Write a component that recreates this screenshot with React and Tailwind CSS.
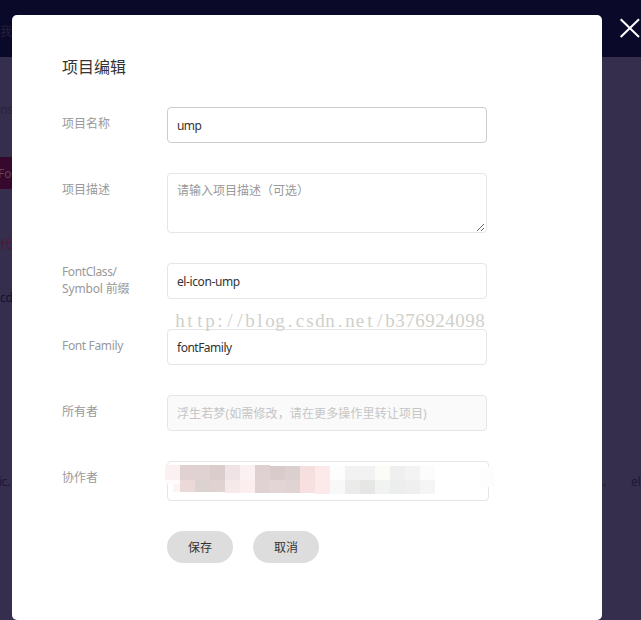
import React from 'react';

const TOP = ['bg-[#fbf1f3]', 'bg-[#e0d2d2]', 'bg-[#e0d2d2]', 'bg-[#dccdcd]', 'bg-[#efe3e6]', 'bg-[#fcf1f2]', 'bg-[#dfd1d1]', 'bg-[#d9cacb]', 'bg-[#dccfcf]', 'bg-[#f6dfdf]', 'bg-[#fce9ea]', 'bg-[#fdfdfd]', 'bg-[#f2f2f2]', 'bg-[#f2f2f3]', 'bg-[#fbfbf8]', 'bg-[#efefef]', 'bg-[#f3f3f3]', 'bg-[#fcfcfc]'];
const BOTTOM = ['bg-transparent', 'bg-[#ead9d7]', 'bg-[#dcd2d0]', 'bg-[#e0d2d1]', 'bg-[#f6e9e9]', 'bg-[#fceeef]', 'bg-[#e0d2d2]', 'bg-[#e3d5d5]', 'bg-[#e0d3d4]', 'bg-[#f8e0e1]', 'bg-[#fceaeb]', 'bg-[#f8f8f8]', 'bg-[#ebebeb]', 'bg-[#e6e6e5]', 'bg-[#f1f3f3]', 'bg-[#ebeeed]', 'bg-[#efefef]', 'bg-[#f5f5f5]'];

function Row({ label, children, labelClass = 'pt-2' }) {
  return (
    <div className="flex items-start">
      <div className={`w-[105px] shrink-0 text-xs leading-[17px] text-[#999] ${labelClass}`}>{label}</div>
      {children}
    </div>
  );
}

const field = 'h-9 w-80 rounded border px-[9px] text-xs outline-none';

function Mosaic() {
  return (
    <div className="absolute -left-[3px] top-[3px]">
      <div className="flex">
        {TOP.map((c, i) => <div key={i} className={`w-[15px] ${i > 6 ? 'mt-px h-[14px]' : 'h-[15px]'} ${c}`} />)}
      </div>
      <div className="flex">
        {BOTTOM.map((c, i) => <div key={i} className={`w-[15px] ${i > 9 ? 'h-[14px]' : i > 3 ? 'h-[13px]' : 'h-3'} ${c}`} />)}
      </div>
      <div className="absolute left-0 top-[15px] h-1 w-[15px] bg-[#fefbfb]" />
      <div className="absolute left-2 top-[19px] h-2 w-[7px] bg-[#fdf3f3]" />
      <div className="absolute left-[315px] top-[2px] h-5 w-[15px] bg-[#fdfdfd]" />
    </div>
  );
}

export default function App() {
  return (
    <div className="relative h-[620px] w-[641px] overflow-hidden bg-[#352e4d] font-['Noto_Sans','Noto_Sans_CJK_SC',sans-serif] text-xs">
      <div className="h-[57px] bg-[#0b0929]" />
      <span className="absolute left-0 top-[24px] whitespace-nowrap text-[#24213d]">我的</span>
      <span className="absolute left-0 top-[102px] tracking-[-.3px] text-[#29233f]">ns</span>
      <div className="absolute left-0 top-[157px] h-8 w-6 bg-[#36082c] pt-[9px] text-[#62445c]"><span className="-ml-[2px]">Fon</span></div>
      <span className="absolute left-0 top-[237px] whitespace-nowrap text-[#551536]">代码</span>
      <span className="absolute left-0 top-[290px] tracking-[-.3px] text-[#15102f]">cd</span>
      <span className="absolute -left-[1px] top-[474px] tracking-[-.5px] text-[#1c1739]">ic.</span>
      <span className="absolute left-[600px] top-[474px] text-[#1c1739]">..</span>
      <span className="absolute left-[631px] top-[474px] text-[#1c1739]">el-</span>

      <svg className="absolute left-[620px] top-[18px]" width="20" height="20" viewBox="0 0 20 20" stroke="#fff" strokeWidth="2">
        <path d="M.7 1.2 19 19M19 1.2 .7 19" />
      </svg>

      <div className="absolute left-3 top-[15px] h-[605px] w-[590px] rounded-[5px] bg-white pl-[50px] pt-10">
        <h2 className="mb-7 h-6 text-base leading-6 text-[#333]">项目编辑</h2>
        <div className="flex flex-col gap-[30px]">
          <Row label="项目名称">
            <input className={`${field} border-[#ccc] tracking-[-.6px] text-[#333]`} defaultValue="ump" />
          </Row>
          <Row label="项目描述">
            <div className="relative h-[60px] w-80 rounded border border-[#e6e6e6] px-[9px] pt-[7px] font-['Noto_Sans_CJK_SC',sans-serif] leading-[18px] text-[#999]">
              请输入项目描述<span lang="zh-TW" className="font-['Noto_Sans_CJK_TC',sans-serif]">（</span>可选<span lang="zh-TW" className="font-['Noto_Sans_CJK_TC',sans-serif]">）</span>
              <svg className="absolute bottom-0 right-px" width="9" height="9" viewBox="0 0 9 9" stroke="#555" strokeWidth=".9">
                <path d="M1 8 8 1M5 8 8 5" />
              </svg>
            </div>
          </Row>
          <Row labelClass="pt-0" label={<><span className="tracking-[-.4px]">FontClass/</span><br /><span className="tracking-[-.15px]">Symbol 前缀</span></>}>
            <input className={`${field} border-[#e6e6e6] tracking-[-.4px] text-[#333]`} defaultValue="el-icon-ump" />
          </Row>
          <Row label={<span className="tracking-[-.35px]">Font Family</span>}>
            <input className={`${field} border-[#e6e6e6] tracking-[-.5px] text-[#333]`} defaultValue="fontFamily" />
          </Row>
          <Row label="所有者">
            <input disabled className={`${field} border-[#e6e6e6] bg-[#fafafa] tracking-[.12px] text-[#c5c5c5]`} defaultValue="浮生若梦(如需修改，请在更多操作里转让项目)" />
          </Row>
          <Row label="协作者">
            <div className="relative h-10 w-[322px] rounded border border-[#e6e6e6]"><Mosaic /></div>
          </Row>
        </div>
        <div className="ml-[105px] mt-[30px] flex gap-5">
          <button className="h-8 w-[66px] rounded-full bg-[#ddd] pt-px text-xs text-[#333]">保存</button>
          <button className="h-8 w-[66px] rounded-full bg-[#ddd] pt-px text-xs text-[#333]">取消</button>
        </div>
      </div>
      <div className="absolute left-[175px] top-[311px] flex font-['Liberation_Serif',serif] text-[19px] leading-5 text-[#d0d0ca]">
        {[...'http://blog.csdn.net/b376924098'].map((c, i) => <span key={i} className="w-[10px] text-center">{c}</span>)}
      </div>
    </div>
  );
}
